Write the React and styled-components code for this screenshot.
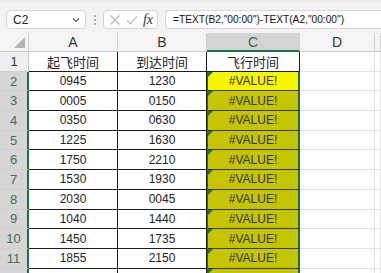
import React from "react";
import styled, { createGlobalStyle } from "styled-components";

const Global = createGlobalStyle`
  html, body { margin: 0; padding: 0; background: #fff; overflow: hidden; }
  body { font-family: "Liberation Sans", "Noto Sans CJK SC", sans-serif; }
`;

const Page = styled.div`
  width: 381px;
  height: 273px;
  overflow: hidden;
  display: flex;
  flex-direction: column;
`;

const Toolbar = styled.div`
  height: 33px;
  flex: none;
  box-sizing: border-box;
  background: #f3f3f3;
  border-top: 3px solid #ebebeb;
  display: flex;
  align-items: flex-start;
  padding: 7px 0 0 6px;
`;

const Box = styled.div`
  height: 19px;
  box-sizing: border-box;
  background: #fff;
  border: 1px solid #d6d6d6;
  border-radius: 4px;
  display: flex;
  align-items: center;
`;

const NameBox = styled(Box)`
  width: 80px;
  padding: 0 4px 0 6px;
  justify-content: space-between;
  font-size: 12px;
  color: #222;
`;

const Dots = styled.div`
  width: 17px;
  height: 19px;
  display: flex;
  flex-direction: column;
  align-items: center;
  justify-content: center;
  gap: 2px;
  & > span {
    width: 2px;
    height: 2px;
    border-radius: 1px;
    background: #9a9a9a;
  }
`;

const FxBox = styled(Box)`
  width: 55px;
  padding: 0 4px 0 5px;
  justify-content: space-between;
  margin-right: 7px;
`;

const Fx = styled.span`
  font-family: "Liberation Serif", serif;
  font-style: italic;
  font-size: 14px;
  color: #333;
  line-height: 1;
`;

const FormulaBox = styled(Box)`
  flex: 1;
  border-right: none;
  border-radius: 4px 0 0 4px;
  padding-left: 7px;
  font-size: 10.2px;
  color: #111;
  white-space: nowrap;
`;

const Sheet = styled.div`
  display: grid;
  grid-template-columns: 29px 89px 89px 93px 75px 6px;
  grid-template-rows: 19px;
  grid-auto-rows: 19.7px;
`;

const ColHead = styled.div`
  box-sizing: border-box;
  background: ${(p) => (p.$sel ? "#d4d4d4" : "#f4f4f4")};
  border-right: 1px solid #d0d0d0;
  border-bottom: ${(p) => (p.$sel ? "2px solid #1e7145" : "1px solid #c8c8c8")};
  color: ${(p) => (p.$sel ? "#2f6e48" : "#333")};
  font-size: 14px;
  display: flex;
  align-items: center;
  justify-content: center;
  position: relative;
`;

const Corner = styled(ColHead)`
  &::after {
    content: "";
    position: absolute;
    right: 3px;
    bottom: 3px;
    width: 0;
    height: 0;
    border-left: 11px solid transparent;
    border-bottom: 11px solid #b5b5b5;
  }
`;

const RowHead = styled.div`
  box-sizing: border-box;
  background: ${(p) => (p.$sel ? "#d6d6d6" : "#efefef")};
  border-bottom: 1px solid #cfcfcf;
  border-right: ${(p) => (p.$sel ? "2px solid #1e7145" : "1px solid #c8c8c8")};
  color: ${(p) => (p.$sel ? "#3f6f52" : "#333")};
  font-size: 13px;
  display: flex;
  align-items: center;
  justify-content: center;
`;

const Cell = styled.div`
  box-sizing: border-box;
  border-right: 1px solid ${(p) => (p.$grid ? "#e1e1e1" : "#1a1a1a")};
  border-bottom: 1px solid ${(p) => (p.$grid ? "#e1e1e1" : "#1a1a1a")};
  background: #fff;
  font-size: 12px;
  color: #222;
  display: flex;
  align-items: center;
  justify-content: center;
  white-space: nowrap;
`;

const HeadText = styled.span`
  font-family: "Noto Sans CJK SC", sans-serif;
  font-size: 13px;
  color: #222;
`;

const ErrCell = styled(Cell)`
  position: relative;
  background: ${(p) => (p.$active ? "#f7f500" : "#c5c400")};
  border-right: 2px solid #1e7145;
  border-left: 1px solid #1e7145;
  border-bottom: 1px solid #3a3a00;
  color: #333;
  &::before {
    content: "";
    position: absolute;
    left: 0;
    top: 0;
    width: 0;
    height: 0;
    border-top: 5px solid #1f7a2f;
    border-right: 5px solid transparent;
  }
`;

const ChevronIcon = () => (
  <svg width="10" height="10" viewBox="0 0 10 10">
    <path d="M2 3.5 L5 6.5 L8 3.5" fill="none" stroke="#555" strokeWidth="1.1" />
  </svg>
);

const XIcon = () => (
  <svg width="12" height="12" viewBox="0 0 12 12">
    <path d="M1.5 1.5 L10.5 10.5 M10.5 1.5 L1.5 10.5" stroke="#b8b8b8" strokeWidth="1.1" />
  </svg>
);

const CheckIcon = () => (
  <svg width="12" height="12" viewBox="0 0 12 12">
    <path d="M1 6.5 L4.5 10 L11 2" fill="none" stroke="#b8b8b8" strokeWidth="1.1" />
  </svg>
);

const rows = [
  ["0945", "1230"],
  ["0005", "0150"],
  ["0350", "0630"],
  ["1225", "1630"],
  ["1750", "2210"],
  ["1530", "1930"],
  ["2030", "0045"],
  ["1040", "1440"],
  ["1450", "1735"],
  ["1855", "2150"],
];

export default function App() {
  return (
    <Page>
      <Global />
      <Toolbar>
        <NameBox>
          <span>C2</span>
          <ChevronIcon />
        </NameBox>
        <Dots>
          <span />
          <span />
          <span />
        </Dots>
        <FxBox>
          <XIcon />
          <CheckIcon />
          <Fx>fx</Fx>
        </FxBox>
        <FormulaBox>=TEXT(B2,"00:00")-TEXT(A2,"00:00")</FormulaBox>
      </Toolbar>
      <Sheet>
        <Corner />
        <ColHead>A</ColHead>
        <ColHead>B</ColHead>
        <ColHead $sel>C</ColHead>
        <ColHead>D</ColHead>
        <ColHead />

        <RowHead>1</RowHead>
        <Cell><HeadText>起飞时间</HeadText></Cell>
        <Cell><HeadText>到达时间</HeadText></Cell>
        <Cell><HeadText>飞行时间</HeadText></Cell>
        <Cell $grid />
        <Cell $grid />

        {rows.map((r, i) => (
          <React.Fragment key={i}>
            <RowHead $sel>{i + 2}</RowHead>
            <Cell>{r[0]}</Cell>
            <Cell>{r[1]}</Cell>
            <ErrCell $active={i === 0}>#VALUE!</ErrCell>
            <Cell $grid />
            <Cell $grid />
          </React.Fragment>
        ))}

        <RowHead $sel />
        <Cell />
        <Cell />
        <ErrCell />
        <Cell $grid />
        <Cell $grid />
      </Sheet>
    </Page>
  );
}
